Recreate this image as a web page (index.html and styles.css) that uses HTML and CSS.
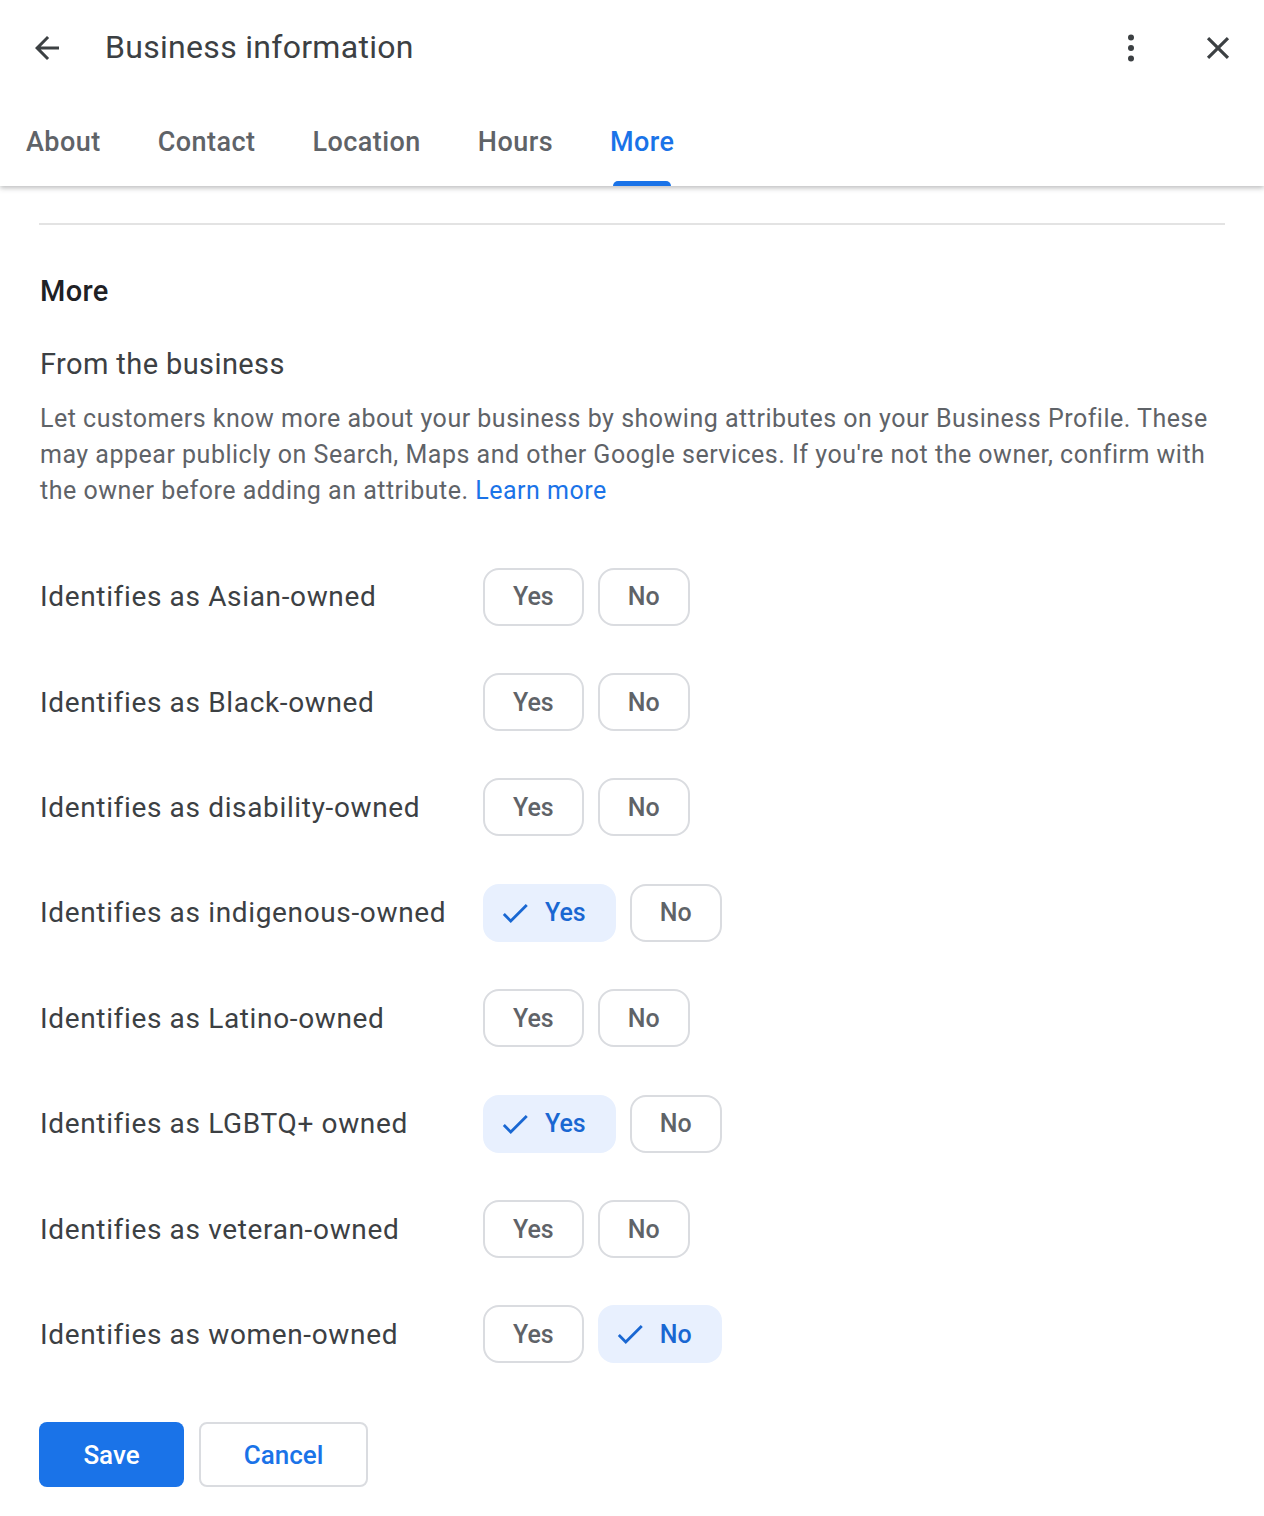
FILE: index.html
```html
<html>
<head>
<meta charset="UTF-8">
<title>Business information</title>
<link rel="stylesheet" href="styles.css">
</head>
<body>
	<div class="header">
		<div class="titlebar">
			<svg class="icon back" viewBox="0 0 24 24" width="36" height="36"><path d="M20 11H7.83l5.59-5.59L12 4l-8 8 8 8 1.41-1.41L7.83 13H20v-2z"/></svg>
			<div class="title">Business information</div>
			<svg class="icon dots" viewBox="0 0 24 24" width="36" height="36"><circle cx="12" cy="5" r="2"/><circle cx="12" cy="12" r="2"/><circle cx="12" cy="19" r="2"/></svg>
			<svg class="icon close" viewBox="0 0 24 24" width="38" height="38"><path d="M19 6.41 17.59 5 12 10.59 6.41 5 5 6.41 10.59 12 5 17.59 6.41 19 12 13.41 17.59 19 19 17.59 13.41 12z"/></svg>
		</div>
		<div class="tabs">
			<div class="tab">About</div>
			<div class="tab">Contact</div>
			<div class="tab">Location</div>
			<div class="tab">Hours</div>
			<div class="tab active">More</div>
		</div>
	</div>

	<div class="content">
		<hr class="divider">
		<h2 class="heading">More</h2>
		<h3 class="subheading">From the business</h3>
		<p class="intro">Let customers know more about your business by showing attributes on your Business Profile. These may appear publicly on Search, Maps and other Google services. If you're not the owner, confirm with the owner before adding an attribute. <a href="#">Learn more</a></p>

		<div class="attrs">
			<div class="attr">
				<div class="label">Identifies as Asian-owned</div>
				<div class="choice"><span class="btn">Yes</span><span class="btn">No</span></div>
			</div>
			<div class="attr">
				<div class="label">Identifies as Black-owned</div>
				<div class="choice"><span class="btn">Yes</span><span class="btn">No</span></div>
			</div>
			<div class="attr">
				<div class="label">Identifies as disability-owned</div>
				<div class="choice"><span class="btn">Yes</span><span class="btn">No</span></div>
			</div>
			<div class="attr">
				<div class="label">Identifies as indigenous-owned</div>
				<div class="choice"><span class="btn on"><svg class="check" viewBox="0 0 24 24" width="34" height="34"><path d="M9 16.17 4.83 12l-1.42 1.41L9 19 21 7l-1.41-1.41z"/></svg>Yes</span><span class="btn">No</span></div>
			</div>
			<div class="attr">
				<div class="label">Identifies as Latino-owned</div>
				<div class="choice"><span class="btn">Yes</span><span class="btn">No</span></div>
			</div>
			<div class="attr">
				<div class="label">Identifies as LGBTQ+ owned</div>
				<div class="choice"><span class="btn on"><svg class="check" viewBox="0 0 24 24" width="34" height="34"><path d="M9 16.17 4.83 12l-1.42 1.41L9 19 21 7l-1.41-1.41z"/></svg>Yes</span><span class="btn">No</span></div>
			</div>
			<div class="attr">
				<div class="label">Identifies as veteran-owned</div>
				<div class="choice"><span class="btn">Yes</span><span class="btn">No</span></div>
			</div>
			<div class="attr">
				<div class="label">Identifies as women-owned</div>
				<div class="choice"><span class="btn">Yes</span><span class="btn on"><svg class="check" viewBox="0 0 24 24" width="34" height="34"><path d="M9 16.17 4.83 12l-1.42 1.41L9 19 21 7l-1.41-1.41z"/></svg>No</span></div>
			</div>
		</div>

		<div class="actions">
			<span class="save">Save</span>
			<span class="cancel">Cancel</span>
		</div>
	</div>
</body>
</html>
```

FILE: styles.css
```css
body {
	margin: 0;
	padding: 0;
	background-color: #FFFFFF;
	font-family: Roboto, "Noto Sans", sans-serif;
	color: #3c4043;
}

.header {
	background: #fff;
	box-shadow: 0 2px 5px rgba(60, 64, 67, 0.35);
	position: relative;
}

.titlebar {
	display: flex;
	align-items: center;
	height: 95px;
}

.icon {
	fill: #3c4043;
	flex: none;
}

.back {
	margin-left: 29px;
}

.title {
	margin-left: 40px;
	font-size: 32px;
	letter-spacing: 0.3px;
	color: #3c4043;
	flex: 1;
	padding-bottom: 2px;
}

.dots {
	margin-right: 50px;
}

.close {
	margin-right: 27px;
}

.tabs {
	display: flex;
	gap: 57px;
	padding-left: 26px;
	height: 91px;
}

.tab {
	position: relative;
	font-size: 27px;
	font-weight: 500;
	color: #5f6368;
	letter-spacing: 0.45px;
	padding-top: 31px;
}

.tab.active {
	color: #1a73e8;
}

.tab.active:after {
	content: "";
	position: absolute;
	left: 3px;
	right: 3px;
	bottom: 0;
	height: 5px;
	background: #1a73e8;
	border-radius: 5px 5px 0 0;
}

.content {
	padding: 0 39px 40px 39px;
}

hr.divider {
	border: 0;
	border-top: 2px solid #e3e3e3;
	margin: 37px 0 0 0;
}

h2.heading {
	font-size: 29px;
	font-weight: 500;
	letter-spacing: 0.3px;
	color: #202124;
	margin: 49px 0 0 1px;
}

h3.subheading {
	font-size: 29px;
	font-weight: 400;
	letter-spacing: 0.4px;
	color: #3c4043;
	margin: 39px 0 0 1px;
}

p.intro {
	font-size: 25px;
	line-height: 36px;
	letter-spacing: 0.5px;
	color: #5f6368;
	margin: 20px 0 0 1px;
}

p.intro a {
	color: #1a73e8;
	text-decoration: none;
}

.attrs {
	margin-top: 35px;
}

.attr {
	display: flex;
	align-items: center;
	height: 105.4px;
}

.label {
	box-sizing: border-box;
	width: 444px;
	font-size: 28px;
	color: #3c4043;
	letter-spacing: 0.65px;
	padding-left: 1px;
}

.choice {
	display: flex;
	gap: 14px;
}

.btn {
	display: flex;
	align-items: center;
	box-sizing: border-box;
	height: 58px;
	padding: 0 28px;
	border: 2px solid #dadce0;
	border-radius: 16px;
	font-size: 25px;
	font-weight: 500;
	color: #5f6368;
}

.btn.on {
	background: #e8f0fe;
	border-color: #e8f0fe;
	color: #1967d2;
	padding-left: 13px;
}

.check {
	fill: #1967d2;
	margin-right: 13px;
}

.actions {
	display: flex;
	gap: 15px;
	margin-top: 35px;
}

.save, .cancel {
	display: flex;
	align-items: center;
	justify-content: center;
	box-sizing: border-box;
	height: 65px;
	border-radius: 8px;
	font-size: 26px;
	font-weight: 500;
}

.save {
	width: 145px;
	background: #1a73e8;
	color: #fff;
}

.cancel {
	width: 169px;
	border: 2px solid #dadce0;
	color: #1a73e8;
}
```
